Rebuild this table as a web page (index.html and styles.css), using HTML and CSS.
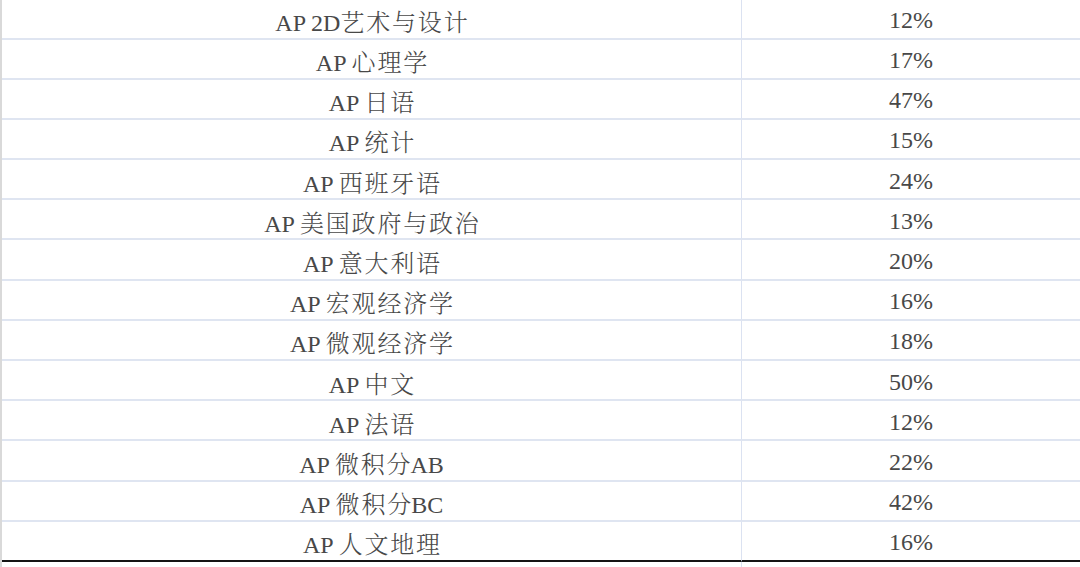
FILE: index.html
```html
<!DOCTYPE html>
<html>
<head>
<meta charset="utf-8">
<link rel="stylesheet" href="styles.css">
</head>
<body>
<div class="table">
  <div class="cell name"><span>AP 2D<span class="cjk">艺术与设计</span></span></div><div class="cell pct">12%</div>
  <div class="cell name"><span>AP <span class="cjk">心理学</span></span></div><div class="cell pct">17%</div>
  <div class="cell name"><span>AP <span class="cjk">日语</span></span></div><div class="cell pct">47%</div>
  <div class="cell name"><span>AP <span class="cjk">统计</span></span></div><div class="cell pct">15%</div>
  <div class="cell name"><span>AP <span class="cjk">西班牙语</span></span></div><div class="cell pct">24%</div>
  <div class="cell name"><span>AP <span class="cjk">美国政府与政治</span></span></div><div class="cell pct">13%</div>
  <div class="cell name"><span>AP <span class="cjk">意大利语</span></span></div><div class="cell pct">20%</div>
  <div class="cell name"><span>AP <span class="cjk">宏观经济学</span></span></div><div class="cell pct">16%</div>
  <div class="cell name"><span>AP <span class="cjk">微观经济学</span></span></div><div class="cell pct">18%</div>
  <div class="cell name"><span>AP <span class="cjk">中文</span></span></div><div class="cell pct">50%</div>
  <div class="cell name"><span>AP <span class="cjk">法语</span></span></div><div class="cell pct">12%</div>
  <div class="cell name"><span>AP <span class="cjk">微积分</span>AB</span></div><div class="cell pct">22%</div>
  <div class="cell name"><span>AP <span class="cjk">微积分</span>BC</span></div><div class="cell pct">42%</div>
  <div class="cell name last"><span>AP <span class="cjk">人文地理</span></span></div><div class="cell pct last">16%</div>
  <div class="cell tail"></div><div class="cell tail-r"></div>
</div>
</body>
</html>
```

FILE: styles.css
```css
html, body {
  margin: 0;
  padding: 0;
  background: #ffffff;
  overflow: hidden;
}

.table {
  display: grid;
  grid-template-columns: 740px 1fr;
  grid-template-rows: repeat(14, 40.2px) 6px;
  margin-top: -0.7px;
  border-left: 2px solid #d9d9d9;
  font-family: "Liberation Serif", "Times New Roman", "Noto Serif CJK SC", "Noto Sans CJK SC", serif;
  font-size: 24px;
  color: #484848;
}

.cell {
  display: flex;
  align-items: center;
  justify-content: center;
  box-sizing: border-box;
  border-bottom: 2px solid #dfe5f1;
  padding-top: 4px;
  white-space: nowrap;
}

.name {
  border-right: 1.5px solid #dbe2f1;
}

.cjk {
  letter-spacing: 1.8px;
  margin-right: -1.8px;
  font-weight: 300;
}

.last {
  border-bottom: 2px solid #151515;
}

.tail {
  border-bottom: none;
  border-right: 1.5px solid #dbe2f1;
}

.tail-r {
  border-bottom: none;
}
```
